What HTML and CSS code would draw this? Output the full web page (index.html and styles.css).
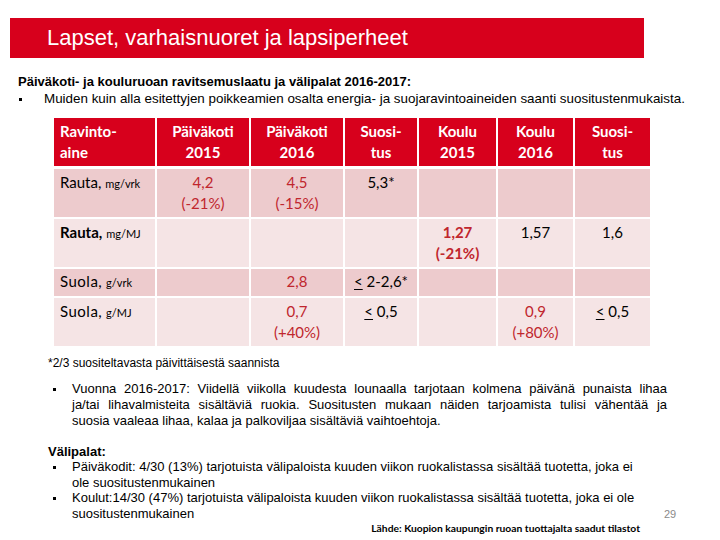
FILE: index.html
```html
<!DOCTYPE html>
<html lang="fi">
<head>
<meta charset="utf-8">
<title>Lapset, varhaisnuoret ja lapsiperheet</title>
<link rel="stylesheet" href="styles.css">
</head>
<body>
<div class="slide">
  <header class="titlebar"><h1>Lapset, varhaisnuoret ja lapsiperheet</h1></header>

  <section class="intro">
    <p class="lead">Päiväkoti- ja kouluruoan ravitsemuslaatu ja välipalat 2016-2017:</p>
    <ul class="blist intro-list">
      <li>Muiden kuin alla esitettyjen poikkeamien osalta energia- ja suojaravintoaineiden saanti suositustenmukaista.</li>
    </ul>
  </section>

  <div class="table">
    <div class="th first">Ravinto-<br>aine</div>
    <div class="th">Päiväkoti<br>2015</div>
    <div class="th">Päiväkoti<br>2016</div>
    <div class="th">Suosi-<br>tus</div>
    <div class="th">Koulu<br>2015</div>
    <div class="th">Koulu<br>2016</div>
    <div class="th">Suosi-<br>tus</div>

    <div class="td dark first"><span class="nm">Rauta,</span> <small>mg/vrk</small></div>
    <div class="td dark red">4,2<br>(-21%)</div>
    <div class="td dark red">4,5<br>(-15%)</div>
    <div class="td dark">5,3*</div>
    <div class="td dark"></div>
    <div class="td dark"></div>
    <div class="td dark"></div>

    <div class="td light first"><span class="nm b">Rauta,</span> <small>mg/MJ</small></div>
    <div class="td light"></div>
    <div class="td light"></div>
    <div class="td light"></div>
    <div class="td light red b">1,27<br>(-21%)</div>
    <div class="td light">1,57</div>
    <div class="td light">1,6</div>

    <div class="td dark first short"><span class="nm sp">Suola,</span> <small>g/vrk</small></div>
    <div class="td dark short"></div>
    <div class="td dark short red">2,8</div>
    <div class="td dark short"><u>&lt;</u> 2-2,6*</div>
    <div class="td dark short"></div>
    <div class="td dark short"></div>
    <div class="td dark short"></div>

    <div class="td light first"><span class="nm sp">Suola,</span> <small>g/MJ</small></div>
    <div class="td light"></div>
    <div class="td light red">0,7<br>(+40%)</div>
    <div class="td light"><u>&lt;</u> 0,5</div>
    <div class="td light"></div>
    <div class="td light red">0,9<br>(+80%)</div>
    <div class="td light"><u>&lt;</u> 0,5</div>
  </div>

  <p class="note">*2/3 suositeltavasta päivittäisestä saannista</p>

  <ul class="blist para">
    <li>
      <span class="jl">Vuonna 2016-2017: Viidellä viikolla kuudesta lounaalla tarjotaan kolmena päivänä punaista lihaa</span>
      <span class="jl">ja/tai lihavalmisteita sisältäviä ruokia. Suositusten mukaan näiden tarjoamista tulisi vähentää ja</span>
      <span class="ll">suosia vaaleaa lihaa, kalaa ja palkoviljaa sisältäviä vaihtoehtoja.</span>
    </li>
  </ul>

  <h2 class="subhead">Välipalat:</h2>
  <ul class="blist snacks">
    <li>
      <span class="ll">Päiväkodit: 4/30 (13%) tarjotuista välipaloista kuuden viikon ruokalistassa sisältää tuotetta, joka ei</span>
      <span class="ll">ole suositustenmukainen</span>
    </li>
    <li>
      <span class="ll">Koulut:14/30 (47%) tarjotuista välipaloista kuuden viikon ruokalistassa sisältää tuotetta, joka ei ole</span>
      <span class="ll">suositustenmukainen</span>
    </li>
  </ul>
  <p class="source">Lähde: Kuopion kaupungin ruoan tuottajalta saadut tilastot</p>
  <span class="pageno">29</span>
</div>
</body>
</html>
```

FILE: styles.css
```css
html, body {
  margin: 0;
  padding: 0;
  background: #fff;
}

.slide {
  position: relative;
  width: 720px;
  height: 540px;
  overflow: hidden;
  font-family: "Liberation Sans", Arial, sans-serif;
  color: #000;
}

.titlebar {
  margin: 18px 0 0 10px;
  width: 634px;
  height: 40px;
  box-sizing: border-box;
  padding-left: 37px;
  background: #d7001c;
  display: flex;
  align-items: center;
}

.titlebar h1 {
  margin: 0;
  font-weight: normal;
  font-size: 22px;
  line-height: 26px;
  color: #fff;
}

.intro {
  margin: 16px 0 0 18px;
}

.lead {
  margin: 0;
  font-weight: bold;
  font-size: 13px;
  line-height: 15px;
}

.blist {
  list-style: none;
  margin: 0;
  padding: 0;
}

.blist li {
  position: relative;
}

.blist li::before {
  content: "";
  position: absolute;
  width: 3px;
  height: 3px;
  background: #000;
}

.intro-list {
  margin-top: 2px;
  font-size: 13.4px;
  line-height: 15px;
}

.intro-list li {
  padding-left: 26px;
}

.intro-list li::before {
  left: 1px;
  top: 7px;
}

/* table */
.table {
  margin: 12px 0 0 54px;
  width: 596px;
  display: grid;
  grid-template-columns: 101px 92px 92px 72px 77px 75px 75px;
  column-gap: 2px;
  row-gap: 2px;
  font-family: Lato, "Open Sans", sans-serif;
  font-size: 15px;
  line-height: 21px;
}

.th {
  background: #d7001c;
  color: #fff;
  font-weight: bold;
  text-align: center;
  padding: 3px 0 3px;
  margin-bottom: 1px;
}

.th.first {
  text-align: left;
  padding-left: 6px;
}

.td {
  text-align: center;
  padding: 3px 0 3px;
  min-height: 42px;
  color: #000;
}

.td.short {
  min-height: 0;
  padding: 2px 0 3px;
}

.td.first {
  text-align: left;
  padding-left: 6px;
}

.td.dark {
  background: #edcbcd;
}

.td.light {
  background: #f5e4e5;
}

.td.red {
  color: #c0262d;
}

.td.b,
.nm.b {
  font-weight: bold;
}

.nm.sp {
  letter-spacing: 0.5px;
}

.td small {
  font-size: 11px;
}

.td u {
  text-underline-offset: 2px;
}

.note {
  margin: 10px 0 0 48px;
  font-size: 12px;
  line-height: 15px;
}

.para {
  margin: 10px 0 0 52px;
  width: 615px;
  font-size: 13px;
  line-height: 16px;
}

.para li,
.snacks li {
  padding-left: 20px;
}

.para li::before {
  left: 1px;
  top: 7px;
}

.jl {
  display: block;
  text-align: justify;
  text-align-last: justify;
}

.ll {
  display: block;
}

.subhead {
  margin: 15px 0 0 48px;
  font-size: 13px;
  line-height: 15px;
  font-weight: bold;
}

.snacks {
  margin: 0 0 0 52px;
  width: 620px;
  font-size: 13px;
  line-height: 15.5px;
}

.snacks li::before {
  left: 1px;
  top: 7px;
}

.source {
  margin: 1px 0 0 0;
  width: 640px;
  text-align: right;
  font-family: Lato, sans-serif;
  font-size: 10.3px;
  line-height: 12px;
  font-weight: bold;
}

.pageno {
  position: absolute;
  left: 664px;
  top: 508px;
  font-size: 11px;
  color: #8a8a8a;
}
```
